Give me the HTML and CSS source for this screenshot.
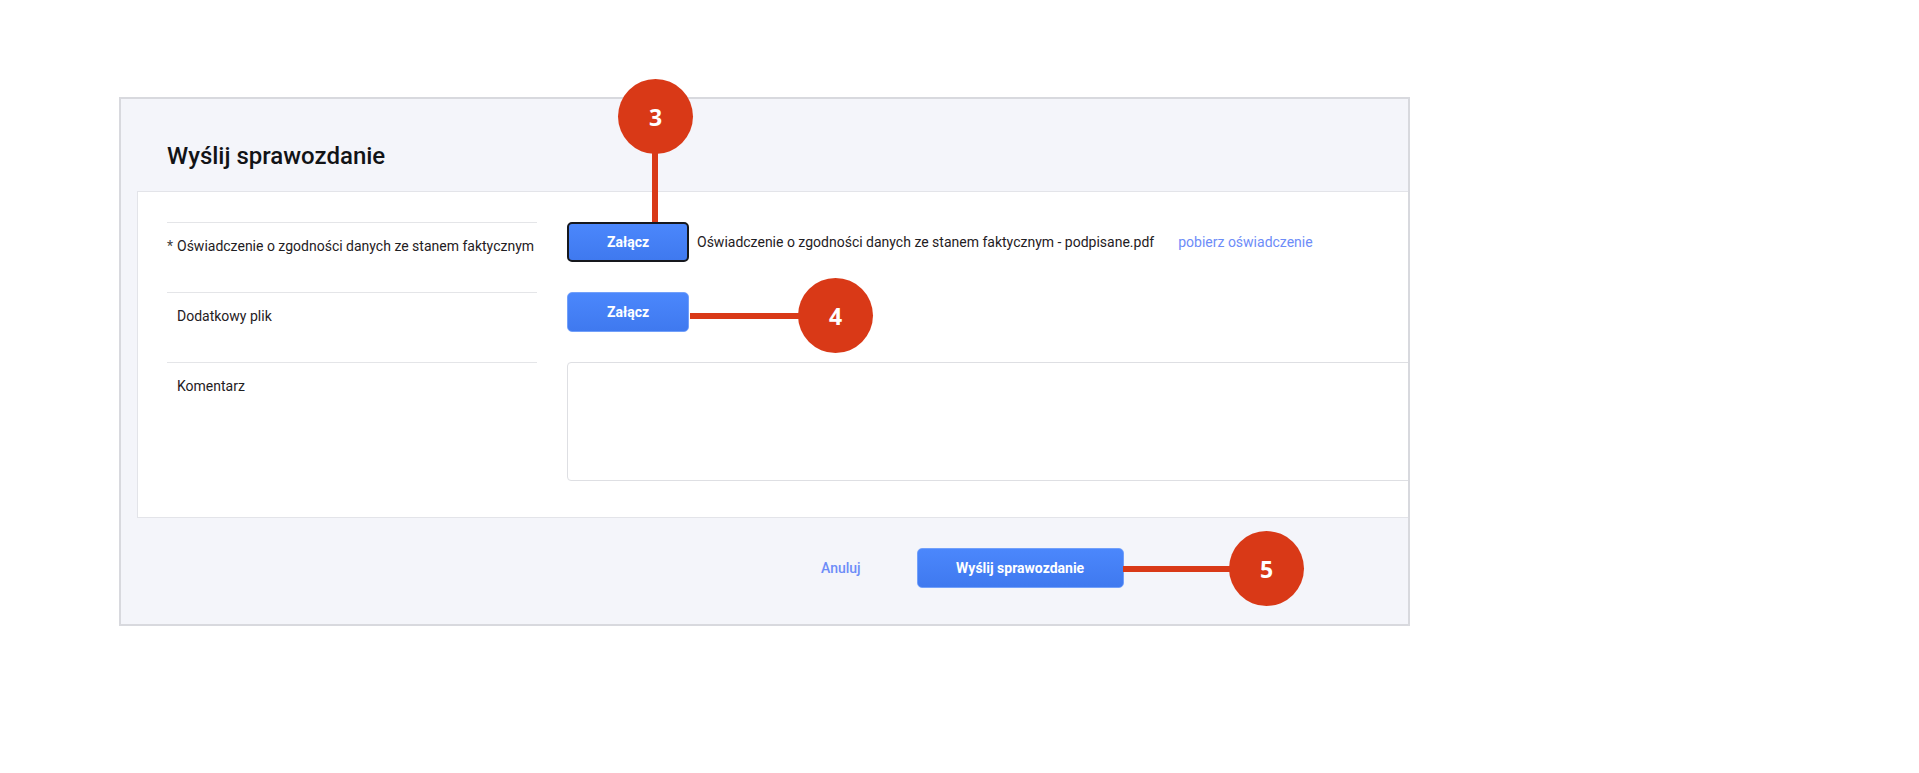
FILE: index.html
```html
<!DOCTYPE html>
<html lang="pl">
<head>
<meta charset="utf-8">
<title>Wyślij sprawozdanie</title>
<link rel="stylesheet" href="styles.css">
</head>
<body>
<div class="page">
  <div class="dialog">
    <div class="dialog-header">
      <h2 class="dialog-title">Wyślij sprawozdanie</h2>
    </div>
    <div class="dialog-body">
      <div class="form-row">
        <div class="form-label"><span class="req">*</span>Oświadczenie o zgodności danych ze stanem faktycznym</div>
        <div class="form-control">
          <button class="btn btn-primary btn-focused">Załącz</button>
          <span class="file-name">Oświadczenie o zgodności danych ze stanem faktycznym - podpisane.pdf</span>
          <a class="link download-link" href="#">pobierz oświadczenie</a>
        </div>
      </div>
      <div class="form-row">
        <div class="form-label">Dodatkowy plik</div>
        <div class="form-control">
          <button class="btn btn-primary">Załącz</button>
        </div>
      </div>
      <div class="form-row form-row-last">
        <div class="form-label">Komentarz</div>
        <div class="form-control">
          <textarea class="comment"></textarea>
        </div>
      </div>
    </div>
    <div class="dialog-footer">
      <a class="link cancel-link" href="#">Anuluj</a>
      <button class="btn btn-primary btn-submit">Wyślij sprawozdanie</button>
    </div>
  </div>

  <div class="marker marker-3">3</div>
  <div class="marker-line line-3"></div>
  <div class="marker marker-4">4</div>
  <div class="marker-line line-4"></div>
  <div class="marker marker-5">5</div>
  <div class="marker-line line-5"></div>
</div>
</body>
</html>
```

FILE: styles.css
```css
* {
  box-sizing: border-box;
}

html, body {
  margin: 0;
  padding: 0;
  background: #ffffff;
  font-family: Roboto, "Noto Sans", "Liberation Sans", sans-serif;
  color: #1f2023;
}

.page {
  position: relative;
  width: 1919px;
  height: 773px;
  padding: 97px 0 0 119px;
}

.dialog {
  width: 1291px;
  height: 529px;
  background: #f4f5fa;
  border: 2px solid #d8d9de;
  overflow: hidden;
  display: flex;
  flex-direction: column;
}

.dialog-header {
  height: 92px;
  padding: 41px 0 0 46px;
  flex: none;
}

.dialog-title {
  margin: 0;
  font-size: 24px;
  line-height: 32px;
  font-weight: 500;
  color: #121316;
}

.dialog-body {
  flex: none;
  width: 1400px;
  margin-left: 16px;
  background: #ffffff;
  border: 1px solid #e3e4e9;
  padding: 30px 0 36px 29px;
}

.form-row {
  display: grid;
  grid-template-columns: 370px 1fr;
  column-gap: 30px;
  padding-bottom: 30px;
}

.form-row-last {
  padding-bottom: 0;
}

.form-label {
  border-top: 1px solid #e4e5e8;
  padding: 12px 0 0 10px;
  font-size: 14px;
  line-height: 22px;
  color: #1f2023;
  white-space: nowrap;
}

.req {
  display: inline-block;
  width: 10px;
  margin-left: -10px;
  color: #444;
}

.form-control {
  display: flex;
  align-items: center;
  align-self: start;
  font-size: 14px;
}

.btn {
  font-family: inherit;
  cursor: pointer;
  border-radius: 5px;
}

.btn-primary {
  width: 122px;
  height: 40px;
  background: linear-gradient(#4b87fc, #3f79ef);
  border: 1px solid #72a0fa;
  color: #ffffff;
  font-size: 14px;
  font-weight: 700;
  padding: 0;
}

.btn-focused {
  border: 2px solid #16181d;
}

.file-name {
  margin-left: 8px;
  color: #1f2023;
  line-height: 22px;
}

.link {
  color: #6d8cf8;
  text-decoration: none;
  font-size: 14px;
  line-height: 22px;
}

.download-link {
  margin-left: 24px;
}

.comment {
  display: block;
  width: 100%;
  height: 119px;
  border: 1px solid #dedfe3;
  border-radius: 4px;
  resize: none;
  background: #ffffff;
}

.dialog-footer {
  flex: 1;
  display: flex;
  align-items: flex-start;
  padding: 30px 0 0 700px;
}

.cancel-link {
  line-height: 40px;
  font-weight: 500;
}

.btn-submit {
  width: 207px;
  margin-left: 56px;
}

.marker {
  position: absolute;
  width: 75px;
  height: 75px;
  border-radius: 50%;
  background: #d93917;
  color: #ffffff;
  font-family: "Open Sans", "Noto Sans", sans-serif;
  font-weight: 700;
  font-size: 23px;
  display: flex;
  align-items: center;
  justify-content: center;
}

.marker-line {
  position: absolute;
  background: #d93917;
}

.marker-3 { left: 618px; top: 79px; }
.line-3 { left: 652px; top: 152px; width: 6px; height: 70px; }

.marker-4 { left: 798px; top: 278px; }
.line-4 { left: 690px; top: 313px; width: 110px; height: 6px; }

.marker-5 { left: 1229px; top: 531px; }
.line-5 { left: 1123px; top: 566px; width: 108px; height: 6px; }
```
